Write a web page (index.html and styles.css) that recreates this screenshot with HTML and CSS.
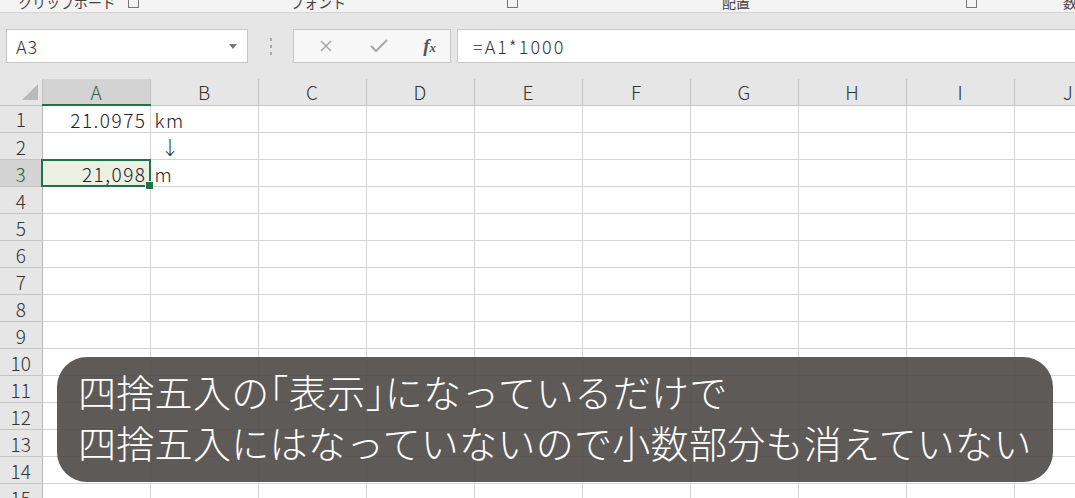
FILE: index.html
```html
<!DOCTYPE html>
<html lang="ja">
<head>
    <meta charset="UTF-8">
    <title>四捨五入の表示</title>
    <link rel="stylesheet" href="styles.css">
</head>
<body>
    <div class="ribbon">
        <div class="group g-clip"><span class="group-label">クリップボード</span><span class="launcher"></span></div>
        <div class="group g-font"><span class="group-label">フォント</span><span class="launcher"></span></div>
        <div class="group g-align"><span class="group-label">配置</span><span class="launcher"></span></div>
        <div class="group g-num"><span class="group-label">数値</span></div>
    </div>

    <div class="formula-bar">
        <div class="name-box">
            <span>A3</span>
            <span class="dropdown"></span>
        </div>
        <div class="grip"><i></i><i></i><i></i></div>
        <div class="fx-buttons">
            <svg class="btn" width="16" height="16" viewBox="0 0 16 16"><path d="M3 3 L13 13 M13 3 L3 13" stroke="#a8a8a8" stroke-width="1.6" fill="none"/></svg>
            <svg class="btn" width="20" height="16" viewBox="0 0 20 16"><path d="M2 8 L7 13 L18 2" stroke="#a8a8a8" stroke-width="2" fill="none"/></svg>
            <span class="fx">f<small>x</small></span>
        </div>
        <div class="formula-input">=A1*1000</div>
    </div>

    <div class="sheet">
        <table class="grid">
            <colgroup>
                <col class="col-head">
                <col span="10" class="col-cell">
            </colgroup>
            <thead>
                <tr>
                    <th class="corner"><svg width="16" height="16" viewBox="0 0 16 16"><path d="M16 0 L16 16 L0 16 Z" fill="#b9b9b9"/></svg></th>
                    <th class="sel">A</th>
                    <th>B</th>
                    <th>C</th>
                    <th>D</th>
                    <th>E</th>
                    <th>F</th>
                    <th>G</th>
                    <th>H</th>
                    <th>I</th>
                    <th>J</th>
                </tr>
            </thead>
            <tbody id="rows"></tbody>
        </table>

        <div class="caption">
            四捨五入の<span class="bracket">「</span>表示<span class="bracket">」</span>になっているだけで<br>
            四捨五入にはなっていないので小数部分も消えていない
        </div>
    </div>

    <script>
        // values typed into the sheet: row -> [A, B]
        const data = {
            1: ['21.0975', 'km'],
            2: ['', '↓'],
            3: ['21,098', 'm']
        };

        const rows = document.getElementById('rows');
        for (let r = 1; r <= 15; r++) {
            const tr = document.createElement('tr');
            const head = document.createElement('th');
            head.textContent = r;
            if (r === 3) head.className = 'sel';
            tr.appendChild(head);

            const values = data[r] || [];
            for (let c = 0; c < 10; c++) {
                const td = document.createElement('td');
                if (c === 0) td.className = 'num';
                if (c === 0 && r === 3) td.className = 'num active';
                if (c === 1 && values[1] === '↓') td.className = 'arrow';
                td.textContent = values[c] || '';
                tr.appendChild(td);
            }
            rows.appendChild(tr);
        }
    </script>
</body>
</html>
```

FILE: styles.css
```css
* {
    margin: 0;
    padding: 0;
    box-sizing: border-box;
}

body {
    width: 1075px;
    height: 498px;
    overflow: hidden;
    background: #fff;
    font-family: 'Noto Sans CJK JP', sans-serif;
    color: #222;
}

/* Ribbon group labels, clipped at the top of the shot */
.ribbon {
    display: flex;
    height: 13px;
    background: #f3f3f3;
    border-bottom: 1px solid #d4d4d4;
    overflow: hidden;
}

.group {
    display: flex;
    flex-shrink: 0;
    align-items: flex-start;
    height: 12px;
}

.group-label {
    font-size: 14px;
    line-height: 14px;
    margin-top: -5px;
    color: #444;
    white-space: nowrap;
}

.launcher {
    margin-left: auto;
    margin-top: -3px;
    width: 11px;
    height: 11px;
    border: 1px solid #777;
    border-top: none;
}

.g-clip { width: 148px; padding-left: 18px; padding-right: 9px; }
.g-font { width: 380px; padding-left: 142px; padding-right: 10px; }
.g-align { width: 457px; padding-left: 194px; padding-right: 8px; }
.g-num { width: 120px; padding-left: 78px; }

/* Name box + formula input */
.formula-bar {
    display: flex;
    align-items: center;
    height: 66px;
    padding-left: 6px;
    background: #e6e6e6;
}

.name-box {
    display: flex;
    align-items: center;
    justify-content: space-between;
    width: 242px;
    height: 34px;
    padding: 0 10px 0 9px;
    background: #fff;
    border: 1px solid #c6c6c6;
    font-size: 18px;
    font-weight: 300;
    letter-spacing: 1px;
    color: #333;
}

.dropdown {
    width: 0;
    height: 0;
    border-left: 4px solid transparent;
    border-right: 4px solid transparent;
    border-top: 5px solid #777;
}

.grip {
    display: flex;
    flex-direction: column;
    align-items: center;
    gap: 4px;
    width: 45px;
}

.grip i {
    width: 2px;
    height: 3px;
    background: #a8a8a8;
}

.fx-buttons {
    display: flex;
    align-items: center;
    justify-content: space-between;
    width: 158px;
    height: 34px;
    padding: 0 14px 0 24px;
    background: #f7f7f7;
    border: 1px solid #c6c6c6;
}

.fx {
    font-family: 'Liberation Serif', serif;
    font-style: italic;
    font-weight: bold;
    font-size: 19px;
    color: #555;
}

.fx small {
    font-size: 13px;
}

.formula-input {
    flex: 1;
    height: 34px;
    margin-left: 6px;
    padding-left: 15px;
    background: #fff;
    border: 1px solid #c6c6c6;
    border-right: none;
    font-size: 18px;
    font-weight: 300;
    line-height: 32px;
    letter-spacing: 2px;
    color: #333;
}

/* Worksheet */
.sheet {
    position: relative;
    height: 419px;
    overflow: hidden;
}

.grid {
    width: 1122px;
    table-layout: fixed;
    border-collapse: collapse;
    font-size: 19px;
    font-weight: 300;
}

.col-head { width: 42px; }
.col-cell { width: 108px; }

.grid thead th {
    height: 26px;
    background: #e6e6e6;
    border-right: 1px solid #c4c4c4;
    border-bottom: 1px solid #c4c4c4;
    font-weight: 300;
    line-height: 24px;
    color: #333;
}

.grid thead th.corner {
    text-align: right;
    vertical-align: middle;
    padding-right: 4px;
    line-height: 0;
}

.grid thead th.sel {
    background: #d3d3d3;
    border-bottom: 2px solid #217346;
    color: #2b5e3f;
}

.grid tbody th {
    height: 27px;
    background: #e6e6e6;
    border-right: 1px solid #b5b5b5;
    border-bottom: 1px solid #c4c4c4;
    font-weight: 300;
    line-height: 25px;
    color: #333;
}

.grid tbody th.sel {
    background: #d3d3d3;
    color: #2b5e3f;
    border-right: 2px solid #217346;
}

.grid td {
    height: 27px;
    padding: 1px 4px 0;
    border-right: 1px solid #d4d4d4;
    border-bottom: 1px solid #d4d4d4;
    line-height: 25px;
    letter-spacing: 1.5px;
    white-space: nowrap;
}

.grid td.num {
    text-align: right;
    padding-right: 3px;
}

.grid td.arrow {
    padding-left: 10px;
}

.grid td.active {
    position: relative;
    background: #eaf0e4;
}

.grid td.active::after {
    content: '';
    position: absolute;
    top: -1px;
    left: -2px;
    right: -1px;
    bottom: -1px;
    border: 2px solid #217346;
}

.grid td.active::before {
    content: '';
    position: absolute;
    right: -4px;
    bottom: -4px;
    width: 7px;
    height: 7px;
    background: #217346;
    border: 1px solid #fff;
    z-index: 1;
}

/* Caption overlay */
.caption {
    position: absolute;
    left: 57px;
    top: 278px;
    width: 996px;
    height: 125px;
    padding: 8px 0 0 21px;
    background: rgba(76, 72, 69, 0.9);
    border-radius: 30px;
    color: #fff;
    font-size: 38px;
    font-weight: 300;
    letter-spacing: 0.3px;
    line-height: 51px;
    white-space: nowrap;
}

.bracket {
    font-feature-settings: "halt";
}
```
